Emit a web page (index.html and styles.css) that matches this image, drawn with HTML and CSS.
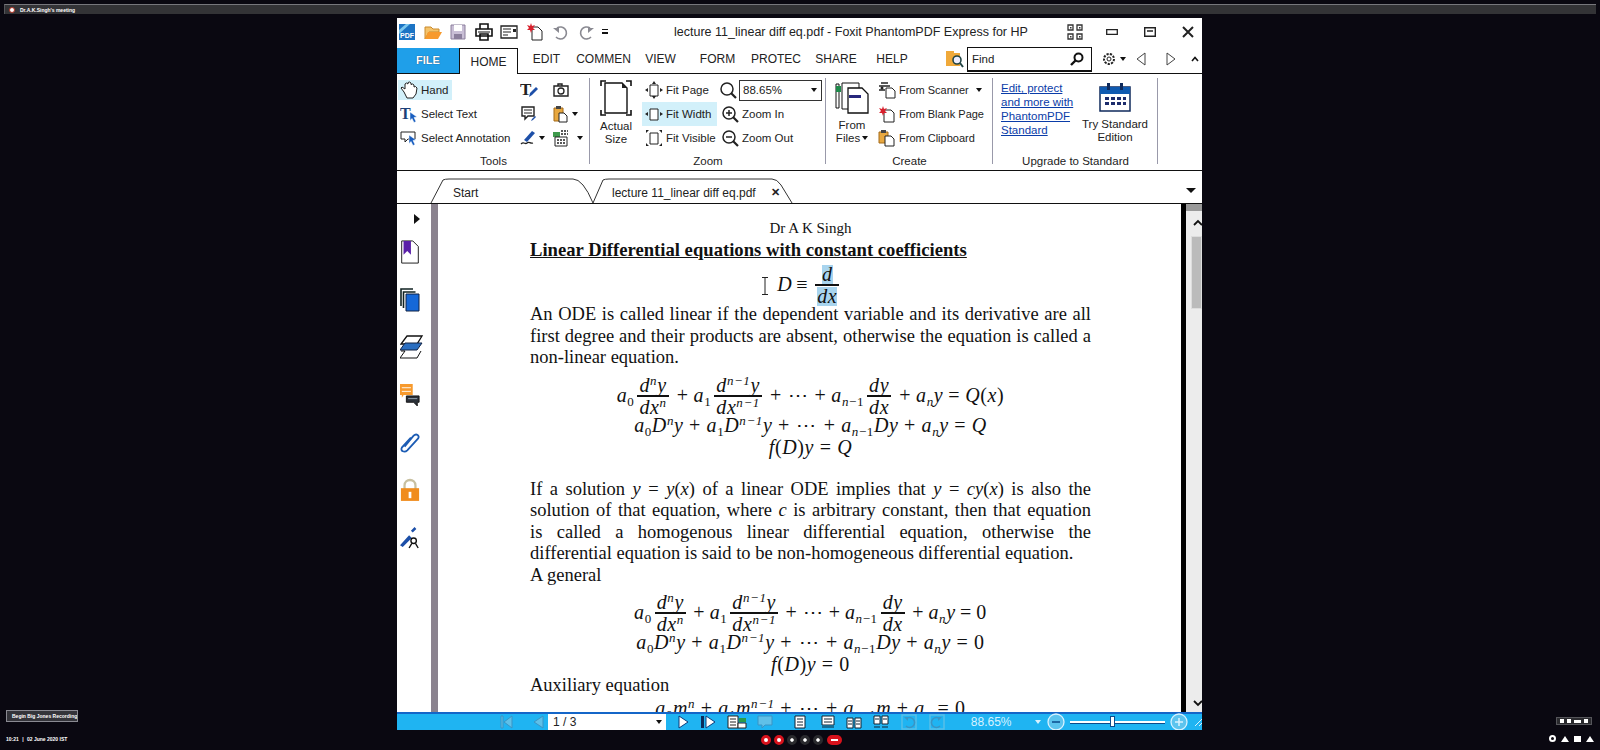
FILE: index.html
```html
<!DOCTYPE html>
<html>
<head lang="en">
    <meta charset="UTF-8">
    <title>lecture 11_linear diff eq.pdf</title>
    <link rel="stylesheet" href="styles.css">
</head>
<body>
<div class="meeting-bar">
    <span class="rec-dot"></span>
    <span class="meeting-name">Dr.A.K.Singh's meeting</span>
</div>

<div class="window">
    <!-- title bar -->
    <div class="titlebar">
        <div class="qat">
            <svg class="qi" viewBox="0 0 18 18"><path fill="#1c74c4" d="M1 1h16v16H1z"/><path fill="#7cc8ee" d="M1 7 8 1h4L1 11z"/><text x="2" y="15" font-size="7" font-weight="700" fill="#fff" font-family="Liberation Sans">PDF</text></svg>
            <svg class="qi" viewBox="0 0 18 18"><path fill="#f4c36a" stroke="#c98a2c" d="M1 4h6l2 2h6v3H5l-4 7z"/><path fill="#f79a2d" d="M4 9h14l-4 7H1z"/></svg>
            <svg class="qi" viewBox="0 0 18 18"><path fill="#c9bfd6" stroke="#8b7f9c" d="M2 2h14v14H2z"/><path fill="#fff" d="M5 2h8v6H5z"/><path fill="#8b7f9c" d="M5 11h8v5H5z"/></svg>
            <svg class="qi" viewBox="0 0 18 18"><path fill="none" stroke="#111" stroke-width="1.6" d="M5 6V1h8v5M1 6h16v7H1zM5 11h8v6H5z"/><path stroke="#111" d="M3 9h12"/></svg>
            <svg class="qi" viewBox="0 0 18 18"><path fill="none" stroke="#222" stroke-width="1.3" d="M1 3h16v12H1z"/><path stroke="#222" stroke-width="1.2" d="M3 6h8M3 9h8M3 12h5"/><path fill="#222" d="M13 6h3v3h-3z"/></svg>
            <svg class="qi" viewBox="0 0 18 18"><path fill="#fff" stroke="#222" d="M6 4h6l4 4v9H6z"/><path fill="#d8202c" d="m5 0 1 3 3-1-2 3 2 2-3 0-1 3-1-3-3 0 2-2-2-3 3 1z"/></svg>
            <svg class="qi" viewBox="0 0 18 18"><path fill="none" stroke="#8a8a92" stroke-width="1.6" d="M5 5a6 6 0 1 1-1 9"/><path fill="#8a8a92" d="M1 5h6v5z"/></svg>
            <svg class="qi" viewBox="0 0 18 18"><path fill="none" stroke="#8a8a92" stroke-width="1.6" d="M13 5a6 6 0 1 0 1 9"/><path fill="#8a8a92" d="M17 5h-6v5z"/></svg>
            <span class="qat-more"></span>
        </div>
        <div class="doc-title">lecture 11_linear diff eq.pdf - Foxit PhantomPDF Express for HP</div>
        <div class="win-btns">
            <svg class="win-grid" viewBox="0 0 16 16"><path fill="none" stroke="#333" stroke-width="1.3" d="M1 1h5v5H1zM10 1h5v5h-5zM1 10h5v5H1zM10 10h5v5h-5z"/><path fill="#333" d="M3 3h1.500v1.500H3zM12 3h1.500v1.500H12zM3 12h1.500v1.500H3zM12 12h1.500v1.500H12z"/></svg>
            <svg class="win-min" viewBox="0 0 12 8"><path fill="none" stroke="#222" stroke-width="1.3" d="M.7 1.7h10.6v4.6H.7z"/></svg>
            <svg class="win-max" viewBox="0 0 12 10"><path fill="none" stroke="#222" stroke-width="1.4" d="M.7.7h10.6v8.6H.7zM3 4h6"/></svg>
            <svg class="win-close" viewBox="0 0 12 12"><path fill="none" stroke="#222" stroke-width="2" d="m1 1 10 10M11 1 1 11"/></svg>
        </div>
    </div>

    <!-- menu tabs -->
    <div class="tabs">
        <div class="file-tab">FILE</div>
        <div class="home-tab">HOME</div>
        <div class="tab">EDIT</div>
        <div class="tab">COMMEN</div>
        <div class="tab">VIEW</div>
        <div class="tab">FORM</div>
        <div class="tab tab-wide">PROTEC</div>
        <div class="tab tab-wide">SHARE</div>
        <div class="tab tab-help">HELP</div>
        <svg class="find-folder" viewBox="0 0 18 18"><path fill="#f0a93a" d="M0 1h8v2h6v13H0z"/><circle cx="11" cy="10" r="4" fill="#eef" stroke="#244" stroke-width="1.6"/><path stroke="#244" stroke-width="2" d="m14 13 3 4"/></svg>
        <div class="find-box">
            <span>Find</span>
            <svg class="find-glass" viewBox="0 0 14 14"><circle cx="8.5" cy="5.5" r="4" fill="none" stroke="#111" stroke-width="2"/><path stroke="#111" stroke-width="2.4" d="M5.5 8.5 1 13"/></svg>
        </div>
        <svg class="tab-gear" viewBox="0 0 16 16"><circle cx="8" cy="8" r="5" fill="none" stroke="#222" stroke-width="2" stroke-dasharray="2.2 1.2"/><circle cx="8" cy="8" r="2" fill="none" stroke="#222"/></svg>
        <span class="caret gear-caret"></span>
        <svg class="tab-nav" viewBox="0 0 10 14"><path fill="#fff" stroke="#444" d="M9 1v12L1 7z"/></svg>
        <svg class="tab-nav nav-next" viewBox="0 0 10 14"><path fill="#fff" stroke="#444" d="M1 1v12l8-6z"/></svg>
        <svg class="tab-up" viewBox="0 0 8 6"><path fill="none" stroke="#111" stroke-width="1.6" d="M1 5 4 1.5 7 5"/></svg>
    </div>

    <!-- ribbon -->
    <div class="ribbon">
        <div class="group group-tools">
            <div class="group-body">
                <div class="col col-tools">
                    <div class="rb-item is-on hand-item">
                        <svg class="ri" viewBox="0 0 18 18"><path fill="#fff" stroke="#222" d="M4 11 1 7l1-1 3 2V3l1.500-1L8 3V1.500L9.500 1 11 2v1.500L12.500 3 14 4v2l1.500-.5L17 7l-1 6-3 4H7z"/></svg>
                        <span>Hand</span>
                    </div>
                    <div class="rb-item">
                        <svg class="ri" viewBox="0 0 18 18"><text x="0" y="14" font-size="16" font-weight="700" fill="#1c3f78" font-family="Liberation Serif">T</text><path fill="#1a5fc0" stroke="#fff" stroke-width=".5" d="m10 7 7 5-3 .5 2 4-2 1-2-4-2 2z"/></svg>
                        <span>Select Text</span>
                    </div>
                    <div class="rb-item">
                        <svg class="ri" viewBox="0 0 18 18"><path fill="#fff" stroke="#222" d="M1 3h14v7H8l-3 3v-3H1z"/><path fill="#1a5fc0" stroke="#fff" stroke-width=".5" d="m9 6 7 5-3 .5 2 4-2 1-2-4-2 2z"/></svg>
                        <span>Select Annotation</span>
                    </div>
                </div>
                <div class="col col-small">
                    <svg class="ri" viewBox="0 0 18 18"><text x="0" y="14" font-size="17" font-weight="700" fill="#222" font-family="Liberation Serif">T</text><path fill="#1d4fa8" d="m9 16 1-4 6-6 2 2-6 6z"/></svg>
                    <svg class="ri" viewBox="0 0 18 18"><path fill="#fff" stroke="#222" stroke-width="1.4" d="M2 2h12v9H8l-3 3v-3H2z"/><path stroke="#222" d="M4 5h8M4 8h8"/><path fill="#1d4fa8" d="m11 16 1-2 3-3 1 1-3 3z"/></svg>
                    <div class="with-caret"><svg class="ri" viewBox="0 0 18 18"><path fill="#1d4fa8" d="m4 11 8-9 3 2-8 9z"/><path fill="none" stroke="#222" stroke-width="1.300" d="M1 15c3-3 4 1 6-1s3 1 6 0"/></svg><span class="caret caret-tight"></span></div>
                </div>
                <div class="col col-small">
                    <svg class="ri ri-cam" viewBox="0 0 18 18"><path fill="none" stroke="#222" stroke-width="1.400" d="M2 5h14v10H2zM6 5V3h4v2"/><circle cx="9" cy="10" r="3" fill="none" stroke="#222" stroke-width="1.300"/></svg>
                    <div class="with-caret"><svg class="ri" viewBox="0 0 18 18"><path fill="#e8a840" stroke="#a46a18" d="M2 3h9v13H2z"/><path fill="#fff" stroke="#222" d="M7 8h5l3 3v6H7z"/><path fill="#444" d="M4 1h5v3H4z"/></svg><span class="caret"></span></div>
                    <div class="with-caret"><svg class="ri" viewBox="0 0 18 18"><path fill="#3f9a4c" d="M1 3h7v5H1z"/><path fill="#fff" stroke="#222" d="M3 8h12v9H3z"/><path stroke="#222" stroke-width="1.400" stroke-dasharray="2 1" d="M5 11h8M5 14h8M9 2h7M9 5h7"/></svg><span class="caret caret-far"></span></div>
                </div>
            </div>
            <div class="group-label">Tools</div>
        </div>

        <div class="group group-zoom">
            <div class="group-body">
                <div class="big-btn actual-btn">
                    <svg class="actual-icon" viewBox="0 0 32 36"><path fill="#fff" stroke="#111" stroke-width="1.400" d="M5 3h17l5 5v25H5z"/><path fill="#222" d="M22 3l5 5h-5z"/><path fill="none" stroke="#111" stroke-width="1.600" d="M1 6V1h5M31 6V1h-5M1 30v5h5M31 30v5h-5"/></svg>
                    <div class="big-text">Actual<br>Size</div>
                </div>
                <div class="col col-fit">
                    <div class="rb-item fit-item">
                        <svg class="ri" viewBox="0 0 18 18"><path fill="#fff" stroke="#222" d="M5 4h8v11H5z"/><path fill="#222" d="m9 0 2 3H7zM9 18l-2-3h4zM0 9l3-2v4zM18 9l-3 2V7z"/></svg>
                        <span>Fit Page</span>
                    </div>
                    <div class="rb-item fit-item is-on">
                        <svg class="ri" viewBox="0 0 18 18"><path fill="#fff" stroke="#222" d="M5 4h8v11H5z"/><path fill="#222" d="m0 9 3-2v4zM18 9l-3 2V7z"/></svg>
                        <span>Fit Width</span>
                    </div>
                    <div class="rb-item fit-item">
                        <svg class="ri" viewBox="0 0 18 18"><path fill="#fff" stroke="#222" d="M5 4h8v11H5z"/><path fill="#222" d="M1 1h3L1 4zM17 1v3l-3-3zM1 17v-3l3 3zM17 17h-3l3-3z"/></svg>
                        <span>Fit Visible</span>
                    </div>
                </div>
                <div class="col col-zoomctl">
                    <div class="zoom-select-row">
                        <svg class="ri" viewBox="0 0 18 18"><circle cx="8" cy="8" r="6" fill="#fff" stroke="#222" stroke-width="1.500"/><path stroke="#222" stroke-width="2.200" d="m12 12 5 5"/></svg>
                        <div class="zoom-select"><span>88.65%</span><span class="caret"></span></div>
                    </div>
                    <div class="rb-item zoom-item">
                        <svg class="ri" viewBox="0 0 18 18"><circle cx="8" cy="8" r="6" fill="#fff" stroke="#222" stroke-width="1.500"/><path stroke="#222" stroke-width="1.500" d="M5 8h6M8 5v6"/><path stroke="#222" stroke-width="2.200" d="m12 12 5 5"/></svg>
                        <span>Zoom In</span>
                    </div>
                    <div class="rb-item zoom-item">
                        <svg class="ri" viewBox="0 0 18 18"><circle cx="8" cy="8" r="6" fill="#fff" stroke="#222" stroke-width="1.500"/><path stroke="#222" stroke-width="1.500" d="M5 8h6"/><path stroke="#222" stroke-width="2.200" d="m12 12 5 5"/></svg>
                        <span>Zoom Out</span>
                    </div>
                </div>
            </div>
            <div class="group-label">Zoom</div>
        </div>

        <div class="group group-create">
            <div class="group-body">
                <div class="big-btn files-btn">
                    <svg class="files-icon" viewBox="0 0 34 32"><path fill="#fff" stroke="#111" d="M1 2h3v24H1z"/><path fill="#fff" stroke="#111" d="M7 1h17v26H7z"/><path fill="#fff" stroke="#111" stroke-width="1.300" d="M13 6h14l6 6v19H13z"/><path fill="#1e8a4a" d="M1 4h5v6H1z"/><path fill="#27277c" d="M14 13h12v3H14z"/></svg>
                    <div class="big-text">From<br>Files<span class="caret caret-in"></span></div>
                </div>
                <div class="col col-create">
                    <div class="rb-item">
                        <svg class="ri" viewBox="0 0 18 18"><path fill="#fff" stroke="#222" d="M8 7h6l3 3v7H8z"/><path fill="none" stroke="#222" stroke-width="1.300" d="M1 5h11M3 2h7M1 9h6"/><circle cx="4" cy="7" r="1.500" fill="#222"/></svg>
                        <span>From Scanner</span><span class="caret scan-caret"></span>
                    </div>
                    <div class="rb-item">
                        <svg class="ri" viewBox="0 0 18 18"><path fill="#fff" stroke="#222" d="M6 5h7l3 3v9H6z"/><path fill="#d8202c" d="m5 1 1 3 3-1-2 3 2 2-3 0-1 3-1-3-3 0 2-2-2-3 3 1z"/></svg>
                        <span>From Blank Page</span>
                    </div>
                    <div class="rb-item">
                        <svg class="ri" viewBox="0 0 18 18"><path fill="#e8a840" stroke="#a46a18" d="M1 3h9v11H1z"/><path fill="#fff" stroke="#222" d="M7 7h6l3 3v7H7z"/><path fill="#444" d="M3 1h5v3H3z"/></svg>
                        <span>From Clipboard</span>
                    </div>
                </div>
            </div>
            <div class="group-label">Create</div>
        </div>

        <div class="group group-upgrade">
            <div class="group-body">
                <div class="upgrade-links">
                    <a href="#">Edit, protect</a>
                    <a href="#">and more with</a>
                    <a href="#">PhantomPDF</a>
                    <a href="#">Standard</a>
                </div>
                <div class="big-btn try-btn">
                    <svg class="cal-icon" viewBox="0 0 32 30"><path fill="#fff" stroke="#0f2a5c" stroke-width="1.500" d="M1 5h30v24H1z"/><path fill="#0f5ab0" d="M1 5h30v7H1z"/><path fill="#0f2a5c" d="M8 1h3v7H8zM21 1h3v7h-3z"/><path fill="#1c2c6c" d="M6 15h4v3H6zM12 15h4v3h-4zM18 15h4v3h-4zM24 15h3v3h-3zM6 20h4v3H6zM12 20h4v3h-4zM18 20h4v3h-4zM24 20h3v3h-3z"/></svg>
                    <div class="big-text">Try Standard<br>Edition</div>
                </div>
            </div>
            <div class="group-label">Upgrade to Standard</div>
        </div>
    </div>

    <!-- document tabs -->
    <div class="doc-tabs">
        <svg class="tab-outline" viewBox="0 0 805 33"><path fill="none" stroke="#333" d="M34 32 46 9Q48 8 52 8H176Q186 8 196 32M196 32 206 9Q208 8 212 8H375Q380 8 384 14L395 32"/></svg>
        <span class="doc-tab-start">Start</span>
        <span class="doc-tab-current">lecture 11_linear diff eq.pdf</span>
        <span class="doc-tab-x">&#10005;</span>
        <span class="doc-tabs-arrow"></span>
    </div>

    <!-- document area -->
    <div class="workspace">
        <div class="nav-pane">
            <span class="nav-arrow"></span>
            <svg class="nav-i" viewBox="0 0 20 26"><path fill="#fff" stroke="#111" d="M1 1h12l6 6v18H1z"/><path fill="#5a20a8" d="M3 1h8v15l-4-4-4 4z"/></svg>
            <svg class="nav-i" viewBox="0 0 20 24"><path fill="none" stroke="#122" stroke-width="1.600" d="M1 18V1h12M3.500 20V4h12"/><path fill="#1668d8" stroke="#124" d="M6 6h13v17H6z"/></svg>
            <svg class="nav-i nav-wide" viewBox="0 0 24 24"><path fill="#fff" stroke="#111" stroke-width="1.300" d="M7 1h15l-5 8H1z"/><path fill="#2a6ec0" stroke="#124" d="M5 8h17l-5 7H0z"/><path fill="#fff" stroke="#111" d="M1 16h4l-5 7h17l4-7"/></svg>
            <svg class="nav-i" viewBox="0 0 22 24"><path fill="#f79a2d" d="M0 0h14v12H4l-2 3v-3H0z"/><path stroke="#fff" d="M2 4h10M2 8h10"/><path fill="#2a3038" stroke="#111" d="M7 13h14v7h-2v4l-4-4H7z"/><path stroke="#9ab" d="M9 16h10"/></svg>
            <svg class="nav-i" viewBox="0 0 22 24"><path fill="none" stroke="#1c5cb4" stroke-width="2" d="M5 16 15 4c3-3 7 0 5 3L8 20c-3 3-8 1-6-3L12 6"/></svg>
            <svg class="nav-i" viewBox="0 0 22 24"><path fill="none" stroke="#c8c0a0" stroke-width="2.500" d="M5 11V7c0-8 12-8 12 0v4"/><path fill="#f08c1c" d="M1 10h20v14H1z"/><path fill="#fff" d="M9.500 14h3v7h-3z"/></svg>
            <svg class="nav-i" viewBox="0 0 22 24"><path fill="#1c4fa8" d="m0 20 10-11 3 3L3 22zM12 4l4-4 2 2-4 4z"/><circle cx="15" cy="15" r="3" fill="#fff" stroke="#111" stroke-width="1.500"/><path stroke="#111" stroke-width="1.500" d="m13 18-3 5M17 18l3 5"/></svg>
        </div>
        <div class="splitter"></div>
        <div class="page-view">
            <div class="page">
                <div class="p-author">Dr A K Singh</div>
                <div class="p-title">Linear Differential equations with constant coefficients</div>
                <div class="eq eq-d">
                    <svg class="ibeam" viewBox="0 0 8 18"><path fill="none" stroke="#222" d="M1 .5h6M1 17.500h6M4 .5v17"/></svg>
                    <i>D</i><span class="rel">&#8801;</span><span class="frac"><span class="num"><span class="sel"><i>d</i></span></span><span class="den"><span class="sel"><i>dx</i></span></span></span>
                </div>
                <div class="line just">An ODE is called linear if the dependent variable and its derivative are all</div>
                <div class="line just">first degree and their products are absent, otherwise the equation is called a</div>
                <div class="line">non-linear equation.</div>
                <div class="eq eq-tall"><i>a</i><sub>0</sub><span class="frac"><span class="num"><i>d<sup>n</sup>y</i></span><span class="den"><i>dx<sup>n</sup></i></span></span><span class="op">+</span><i>a</i><sub>1</sub><span class="frac"><span class="num"><i>d<sup>n&#8722;1</sup>y</i></span><span class="den"><i>dx<sup>n&#8722;1</sup></i></span></span><span class="op">+</span><span class="op0">&#8943;</span><span class="op">+</span><i>a</i><sub><i>n</i>&#8722;1</sub><span class="frac"><span class="num"><i>dy</i></span><span class="den"><i>dx</i></span></span><span class="op">+</span><i>a<sub>n</sub>y</i><span class="op">=</span><i>Q</i>(<i>x</i>)</div>
                <div class="eq eq-row eq-pull"><i>a</i><sub>0</sub><i>D<sup>n</sup>y</i><span class="op">+</span><i>a</i><sub>1</sub><i>D<sup>n&#8722;1</sup>y</i><span class="op">+</span><span class="op0">&#8943;</span><span class="op">+</span><i>a</i><sub><i>n</i>&#8722;1</sub><i>Dy</i><span class="op">+</span><i>a<sub>n</sub>y</i><span class="op">=</span><i>Q</i></div>
                <div class="eq eq-row"><i>f</i>(<i>D</i>)<i>y</i><span class="op">=</span><i>Q</i></div>

                <div class="line just para-gap">If a solution <i>y</i> = <i>y</i>(<i>x</i>) of a linear ODE implies that <i>y</i> = <i>cy</i>(<i>x</i>) is also the</div>
                <div class="line just">solution of that equation, where <i>c</i> is arbitrary constant, then that equation</div>
                <div class="line just">is called a homogenous linear differential equation, otherwise the</div>
                <div class="line">differential equation is said to be non-homogeneous differential equation.</div>
                <div class="line">A general</div>
                <div class="eq eq-tall eq-second"><i>a</i><sub>0</sub><span class="frac"><span class="num"><i>d<sup>n</sup>y</i></span><span class="den"><i>dx<sup>n</sup></i></span></span><span class="op">+</span><i>a</i><sub>1</sub><span class="frac"><span class="num"><i>d<sup>n&#8722;1</sup>y</i></span><span class="den"><i>dx<sup>n&#8722;1</sup></i></span></span><span class="op">+</span><span class="op0">&#8943;</span><span class="op">+</span><i>a</i><sub><i>n</i>&#8722;1</sub><span class="frac"><span class="num"><i>dy</i></span><span class="den"><i>dx</i></span></span><span class="op">+</span><i>a<sub>n</sub>y</i><span class="op">=</span>0</div>
                <div class="eq eq-row eq-pull"><i>a</i><sub>0</sub><i>D<sup>n</sup>y</i><span class="op">+</span><i>a</i><sub>1</sub><i>D<sup>n&#8722;1</sup>y</i><span class="op">+</span><span class="op0">&#8943;</span><span class="op">+</span><i>a</i><sub><i>n</i>&#8722;1</sub><i>Dy</i><span class="op">+</span><i>a<sub>n</sub>y</i><span class="op">=</span>0</div>
                <div class="eq eq-row"><i>f</i>(<i>D</i>)<i>y</i><span class="op">=</span>0</div>
                <div class="line">Auxiliary equation</div>
                <div class="eq eq-row"><i>a</i><sub>0</sub><i>m<sup>n</sup></i><span class="op">+</span><i>a</i><sub>1</sub><i>m<sup>n&#8722;1</sup></i><span class="op">+</span><span class="op0">&#8943;</span><span class="op">+</span><i>a</i><sub><i>n</i>&#8722;1</sub><i>m</i><span class="op">+</span><i>a<sub>n</sub></i><span class="op">=</span>0</div>
            </div>
        </div>
        <div class="page-edge"></div>
        <div class="scrollbar">
            <div class="sb-top"></div>
            <svg class="sb-arrow" viewBox="0 0 10 7"><path fill="none" stroke="#111" stroke-width="1.800" d="M1 6 5 2l4 4"/></svg>
            <div class="sb-thumb"></div>
            <svg class="sb-arrow sb-down" viewBox="0 0 10 7"><path fill="none" stroke="#111" stroke-width="1.800" d="M1 1l4 4 4-4"/></svg>
        </div>
    </div>

    <!-- status bar -->
    <div class="statusbar">
        <svg class="st st-first" viewBox="0 0 14 14"><path fill="#5fc0e8" stroke="#3a94c4" d="M12 1v12L4 7zM1 1h2v12H1z"/></svg>
        <svg class="st st-prev" viewBox="0 0 14 14"><path fill="#5fc0e8" stroke="#3a94c4" d="M12 1v12L3 7z"/></svg>
        <div class="page-box"><span>1 / 3</span><span class="caret"></span></div>
        <svg class="st st-next" viewBox="0 0 14 14"><path fill="#fff" stroke="#0a3c7c" d="M2 1v12l9-6z"/></svg>
        <svg class="st st-last" viewBox="0 0 18 14"><path fill="#0a2c5c" d="M1 1h3v12H1z"/><path fill="#fff" stroke="#0a3c7c" d="M6 1v12l9-6z"/></svg>
        <svg class="st st-view1" viewBox="0 0 20 14"><path fill="#fff" stroke="#222" d="M1 1h10v12H1z"/><path stroke="#222" d="M3 4h6M3 7h6M3 10h6"/><path fill="#2a9a4a" d="M12 3h7v4h-7z"/><path fill="#fff" stroke="#222" d="M11 8h8v5h-8z"/></svg>
        <svg class="st st-view2" viewBox="0 0 16 14"><path fill="#5fc0e8" stroke="#3a94c4" d="M1 1h14v9H8l-3 3v-3H1z"/></svg>
        <svg class="st st-p1" viewBox="0 0 12 14"><path fill="#fff" stroke="#123" d="M1 1h10v12H1z"/><path stroke="#123" d="M3 4h6M3 7h6M3 10h6"/></svg>
        <svg class="st st-p2" viewBox="0 0 14 14"><path fill="#fff" stroke="#123" d="M1 1h12v9H1z"/><path stroke="#123" d="M3 4h8M3 7h8M1 12h12"/></svg>
        <svg class="st st-p3" viewBox="0 0 16 14"><path fill="#fff" stroke="#123" d="M1 3h6v10H1zM9 3h6v10H9z"/><path stroke="#123" d="M2 6h4M2 9h4M10 6h4M10 9h4"/></svg>
        <svg class="st st-p4" viewBox="0 0 16 14"><path fill="#fff" stroke="#123" d="M1 1h6v8H1zM9 1h6v8H9z"/><path stroke="#123" d="M1 12h6M9 12h6M2 4h4M10 4h4"/></svg>
        <svg class="st st-undo" viewBox="0 0 16 16"><path fill="none" stroke="#58bfe8" stroke-width="1.500" d="M1 1h14v14H1z"/><path fill="none" stroke="#3a94c4" stroke-width="1.500" d="M5 5a5 5 0 1 1 0 7"/><path fill="#3a94c4" d="M3 3h4v4z"/></svg>
        <svg class="st st-redo" viewBox="0 0 16 16"><path fill="none" stroke="#58bfe8" stroke-width="1.500" d="M1 1h14v14H1z"/><path fill="none" stroke="#3a94c4" stroke-width="1.500" d="M11 5a5 5 0 1 0 0 7"/><path fill="#3a94c4" d="M13 3H9v4z"/></svg>
        <span class="st-zoom">88.65%</span>
        <span class="caret st-caret"></span>
        <svg class="st st-minus" viewBox="0 0 18 18"><circle cx="9" cy="9" r="8" fill="#5cc4ee" stroke="#d8f2ff" stroke-width="1.300"/><path stroke="#0a4c8c" stroke-width="1.500" d="M5 9h8"/></svg>
        <div class="slider"><span class="slider-knob"></span></div>
        <svg class="st st-plus" viewBox="0 0 18 18"><circle cx="9" cy="9" r="8" fill="#5cc4ee" stroke="#d8f2ff" stroke-width="1.300"/><path stroke="#d8f2ff" stroke-width="1.500" d="M5 9h8M9 5v8"/></svg>
        <svg class="st st-grip" viewBox="0 0 8 8"><path stroke="#d8f2ff" d="M8 1 1 8M8 5 5 8"/></svg>
    </div>
</div>

<!-- meeting controls over the shared screen -->
<div class="rec-button">Begin Big Jones Recording</div>
<div class="clock">10:21 <b>|</b> 02 June 2020 IST</div>
<div class="call-tools">
    <span class="ct ct-red"></span><span class="ct ct-red"></span><span class="ct"></span><span class="ct"></span><span class="ct"></span><span class="ct-end"></span>
</div>
<div class="view-box"><span></span><span></span><span class="vb-wide"></span><span></span></div>
<div class="tray"><span class="tray-ring"></span><span class="tray-tri"></span><span class="tray-sq"></span><span class="tray-tri"></span></div>
</body>
</html>
```

FILE: styles.css
```css
*{box-sizing:border-box;margin:0;padding:0;}
html,body{width:1600px;height:750px;overflow:hidden;}
body{position:relative;background:#0a0811;font-family:"Liberation Sans",Arial,sans-serif;color:#1a1a1a;}

/* dark meeting frame */
.meeting-bar{position:absolute;left:4px;right:4px;top:4px;height:10px;background:#333336;border-top:1px solid #77777c;border-left:1px solid #55555a;display:flex;align-items:center;padding-left:4px;}
.rec-dot{width:6px;height:6px;border-radius:50%;background:#fff;border:1px solid #b03020;margin-right:5px;}
.meeting-name{font-size:5px;font-weight:700;color:#fff;}
.rec-button{position:absolute;left:6px;top:710px;width:72px;height:12px;background:#34343a;border:1px solid #8a8a92;color:#fff;font-size:5px;font-weight:700;line-height:10px;padding-left:5px;white-space:nowrap;overflow:hidden;}
.clock{position:absolute;left:6px;top:736px;color:#fff;font-size:5px;font-weight:700;white-space:nowrap;}
.clock b{margin:0 2px;}
.call-tools{position:absolute;left:761px;top:735px;display:flex;gap:3px;align-items:center;}
.ct{width:10px;height:10px;border-radius:50%;background:#1c1c20;border:3px solid #2a2a2e;box-shadow:inset 0 0 0 2px #fff;}
.ct-red{background:#fff;border-color:#d8121c;box-shadow:none;}
.ct-end{width:15px;height:10px;border-radius:6px;background:#d8121c;position:relative;margin-left:1px;}
.ct-end:after{content:"";position:absolute;left:4px;top:4px;width:7px;height:2px;background:#fff;}
.view-box{position:absolute;left:1556px;top:717px;width:36px;height:8px;background:#2a2a2e;border:1px solid #55555a;display:flex;gap:3px;align-items:center;padding:0 3px;}
.view-box span{width:4px;height:4px;background:#fff;}
.view-box .vb-wide{width:8px;height:3px;}
.tray{position:absolute;left:1549px;top:735px;display:flex;gap:5px;align-items:center;}
.tray span{display:block;}
.tray-ring{width:7px;height:7px;border:2px solid #fff;border-radius:50%;}
.tray-tri{width:0;height:0;border:4px solid transparent;border-bottom:6px solid #fff;border-top:0;}
.tray-sq{width:7px;height:6px;background:#fff;}

/* the PDF application window */
.window{position:absolute;left:397px;top:18px;width:805px;height:712px;background:#fff;display:flex;flex-direction:column;overflow:hidden;}
svg{display:block;flex:none;}
.caret{display:inline-block;width:0;height:0;border:3px solid transparent;border-top:4px solid #111;border-bottom:0;}

.titlebar{height:27px;display:flex;align-items:center;flex:none;}
.qat{display:flex;align-items:center;gap:7.6px;padding-left:1px;width:277px;}
.qi{width:18px;height:18px;}
.qat-more{width:6px;height:6px;border-top:1px solid #111;border-bottom:4px solid transparent;position:relative;margin-left:-1px;background:linear-gradient(#111,#111) 0 2px/6px 2px no-repeat;}
.doc-title{font-size:12.5px;color:#222;white-space:nowrap;width:393px;}
.win-btns{display:flex;align-items:center;}
.win-grid{width:16px;height:16px;}
.win-min{width:12px;height:8px;margin-left:23px;}
.win-max{width:12px;height:10px;margin-left:26px;}
.win-close{width:12px;height:12px;margin-left:26px;}

.tabs{height:29px;flex:none;display:flex;align-items:center;border-bottom:1px solid #111;font-size:12px;color:#222;}
.file-tab{width:62px;height:25px;margin-top:3px;background:#1f9fe9;color:#fff;font-size:11px;font-weight:700;text-align:center;line-height:25px;text-shadow:0 0 1px #124;}
.home-tab{width:59px;height:26px;margin-top:3px;border:1px solid #111;border-bottom:0;background:#fff;text-align:center;line-height:26px;}
.tab{width:57px;text-align:center;}
.tab-wide{width:60px;}
.tab-help{width:52px;}
.find-folder{width:18px;height:18px;margin-left:28px;}
.find-box{width:125px;height:25px;margin-left:3px;border:1px solid #111;border-bottom-width:2px;display:flex;align-items:center;justify-content:space-between;padding:0 7px 0 4px;font-size:11.5px;}
.find-glass{width:14px;height:14px;}
.tab-gear{width:16px;height:16px;margin-left:9px;}
.gear-caret{margin-left:3px;}
.tab-nav{width:10px;height:14px;margin-left:10px;}
.nav-next{margin-left:20px;}
.tab-up{width:8px;height:6px;margin-left:15px;}

.ribbon{height:97px;flex:none;display:flex;border-bottom:1px solid #111;font-size:11.5px;color:#222;}
.group{display:flex;flex-direction:column;padding-top:4px;}
.group-tools{width:193px;}
.group-zoom{width:236px;}
.group-create{width:167px;}
.group-upgrade{width:165px;}
.group-body{flex:1;display:flex;position:relative;}
.group-body:after{content:"";position:absolute;right:0;top:0;bottom:-14px;border-right:1px solid #99a;}
.group-label{height:20px;line-height:23px;text-align:center;}
.col{display:flex;flex-direction:column;}
.col > *{height:24px;}
.rb-item{display:flex;align-items:center;white-space:nowrap;}
.ri{width:18px;height:18px;}
.rb-item .ri{margin-right:3px;}
.is-on{background:#d2f0fa;}
.col-tools{width:123px;padding-left:3px;}
.hand-item{width:54px;height:20px;margin:2px 0 2px -2px;padding-left:2px;}
.col-small{width:32px;align-items:flex-start;justify-content:flex-start;}
.col-small > .ri{margin:3px 0;}
.with-caret{display:flex;align-items:center;gap:2px;}
.caret-far{margin-left:5px;}
.caret-tight{margin-left:-1px;}
.big-btn{display:flex;flex-direction:column;align-items:center;}
.big-text{font-size:11.5px;line-height:13px;text-align:center;margin-top:4px;white-space:nowrap;}
.actual-btn{width:52px;padding-top:2px;}
.actual-icon{width:32px;height:36px;}
.col-fit{width:75px;}
.fit-item{padding-left:3px;}
.col-zoomctl{width:109px;}
.zoom-select-row{display:flex;align-items:center;height:24px;}
.zoom-select-row .ri{margin:0 2px 0 2px;}
.zoom-select{width:83px;height:21px;border:1px solid #333;display:flex;align-items:center;justify-content:space-between;padding:0 4px 0 3px;}
.zoom-item{padding-left:4px;}
.files-btn{width:52px;padding-top:4px;}
.files-icon{width:34px;height:32px;}
.files-btn .big-text{margin-top:5px;}
.caret-in{margin-left:2px;vertical-align:2px;}
.col-create{font-size:11px;}
.scan-caret{margin-left:7px;}
.upgrade-links{width:100px;padding:3px 0 0 8px;display:flex;flex-direction:column;line-height:14px;}
.upgrade-links a{color:#0a3ca8;}
.try-btn{width:70px;margin-left:-13px;padding-top:4px;}
.cal-icon{width:32px;height:30px;margin-bottom:2px;}

.doc-tabs{height:33px;flex:none;position:relative;border-bottom:1px solid #111;font-size:12px;color:#222;}
.tab-outline{position:absolute;left:0;top:0;width:805px;height:33px;}
.doc-tab-start{position:absolute;left:56px;top:15px;}
.doc-tab-current{position:absolute;left:215px;top:15px;white-space:nowrap;}
.doc-tab-x{position:absolute;left:374px;top:15px;font-weight:700;font-size:11px;}
.doc-tabs-arrow{position:absolute;right:6px;top:17px;width:0;height:0;border:5px solid transparent;border-top:5px solid #111;border-bottom:0;}

.workspace{flex:1;display:flex;min-height:0;}
.nav-pane{width:34px;flex:none;display:flex;flex-direction:column;align-items:flex-start;padding:10px 0 0 3px;}
.nav-arrow{width:0;height:0;border:5px solid transparent;border-left:6px solid #111;border-right:0;margin:0 0 16px 14px;}
.nav-i{width:20px;height:24px;margin-bottom:23.7px;}
.nav-wide{width:24px;}
.splitter{width:8px;flex:none;background:#8a828e;border-right:1px solid #fff;}
.page-view{flex:1;overflow:hidden;min-width:0;}
.page-edge{width:5px;flex:none;background:#000;}
.scrollbar{width:16px;flex:none;position:relative;background:#ececec;}
.sb-top{height:7px;background:#999;}
.sb-arrow{width:10px;height:7px;margin:8px 0 0 7px;}
.sb-thumb{width:11px;height:73px;margin:10px 0 0 5px;background:#bbb;border:1px solid #ddd;}
.sb-down{position:absolute;left:0;bottom:5px;}

/* page content */
.page{padding:14px 0 0 91px;width:652px;font-family:"Liberation Serif","Times New Roman",serif;font-size:18.5px;color:#111;}
.p-author{height:21px;line-height:21px;text-align:center;font-size:15px;}
.p-title{height:22px;line-height:22px;font-weight:700;font-size:18.65px;text-decoration:underline;white-space:nowrap;}
.line{height:21.5px;line-height:21.5px;white-space:nowrap;}
.just{white-space:normal;text-align:justify;text-align-last:justify;}
.para-gap{margin-top:21px;}
.eq{text-align:center;white-space:nowrap;font-size:20px;letter-spacing:.6px;}
.eq sub,.eq sup{font-size:13px;line-height:0;}
.eq sub{vertical-align:-4px;}
.eq sup{vertical-align:7px;}
.eq-d{height:43px;line-height:46px;padding-right:18px;}
.ibeam{display:inline-block;width:8px;height:18px;vertical-align:middle;margin-right:3px;}
.rel{margin:0 4px;}
.eq-tall{height:44px;line-height:44px;margin-top:4px;}
.eq-row{height:22px;line-height:22px;}
.eq-pull{margin-top:-3px;}
.op{margin:0 5px;font-style:normal;}
.eq-row .op{margin:0 5.6px;}
.eq-second .op{margin:0 4.4px;}
.op0{margin:0 1px;}
.frac{display:inline-flex;flex-direction:column;align-items:stretch;margin:0 3px;vertical-align:middle;}
.num,.den{display:block;line-height:21px;height:22px;padding:0 2px;text-align:center;}
.num{border-bottom:2px solid #111;}
.sel{display:inline-block;line-height:19px;background:#a8d4ee;}

/* status bar */
.statusbar{height:18px;flex:none;display:flex;align-items:center;background:#1fb4f2;border-top:2px solid #1466c8;position:relative;}
.st{flex:none;}
.st-first{width:14px;height:14px;margin-left:103px;}
.st-prev{width:14px;height:14px;margin-left:17px;}
.page-box{width:120px;height:16px;margin-left:3px;background:#fff;display:flex;align-items:center;justify-content:space-between;padding:0 4px 0 5px;font-size:12px;color:#222;}
.st-next{width:14px;height:14px;margin-left:11px;}
.st-last{width:18px;height:14px;margin-left:9px;}
.st-view1{width:20px;height:14px;margin-left:9px;}
.st-view2{width:16px;height:14px;margin-left:10px;}
.st-p1{width:12px;height:14px;margin-left:21px;}
.st-p2{width:14px;height:14px;margin-left:15px;}
.st-p3{width:16px;height:14px;margin-left:11px;}
.st-p4{width:16px;height:14px;margin-left:11px;}
.st-undo{width:16px;height:16px;margin-left:12px;}
.st-redo{width:16px;height:16px;margin-left:12px;}
.st-zoom{font-size:12px;color:#d8f2ff;margin-left:26px;width:42px;}
.st-caret{border-top-color:#d8f2ff;margin-left:23px;}
.st-minus{width:18px;height:18px;margin-left:6px;}
.slider{width:97px;height:3px;margin-left:5px;background:#fff;border-bottom:1px solid #0a4c8c;position:relative;}
.slider-knob{position:absolute;left:40px;top:-5px;width:5px;height:11px;background:#fff;border:1px solid #0a4c8c;}
.st-plus{width:18px;height:18px;margin-left:5px;}
.st-grip{width:8px;height:8px;margin-left:6px;}
```
